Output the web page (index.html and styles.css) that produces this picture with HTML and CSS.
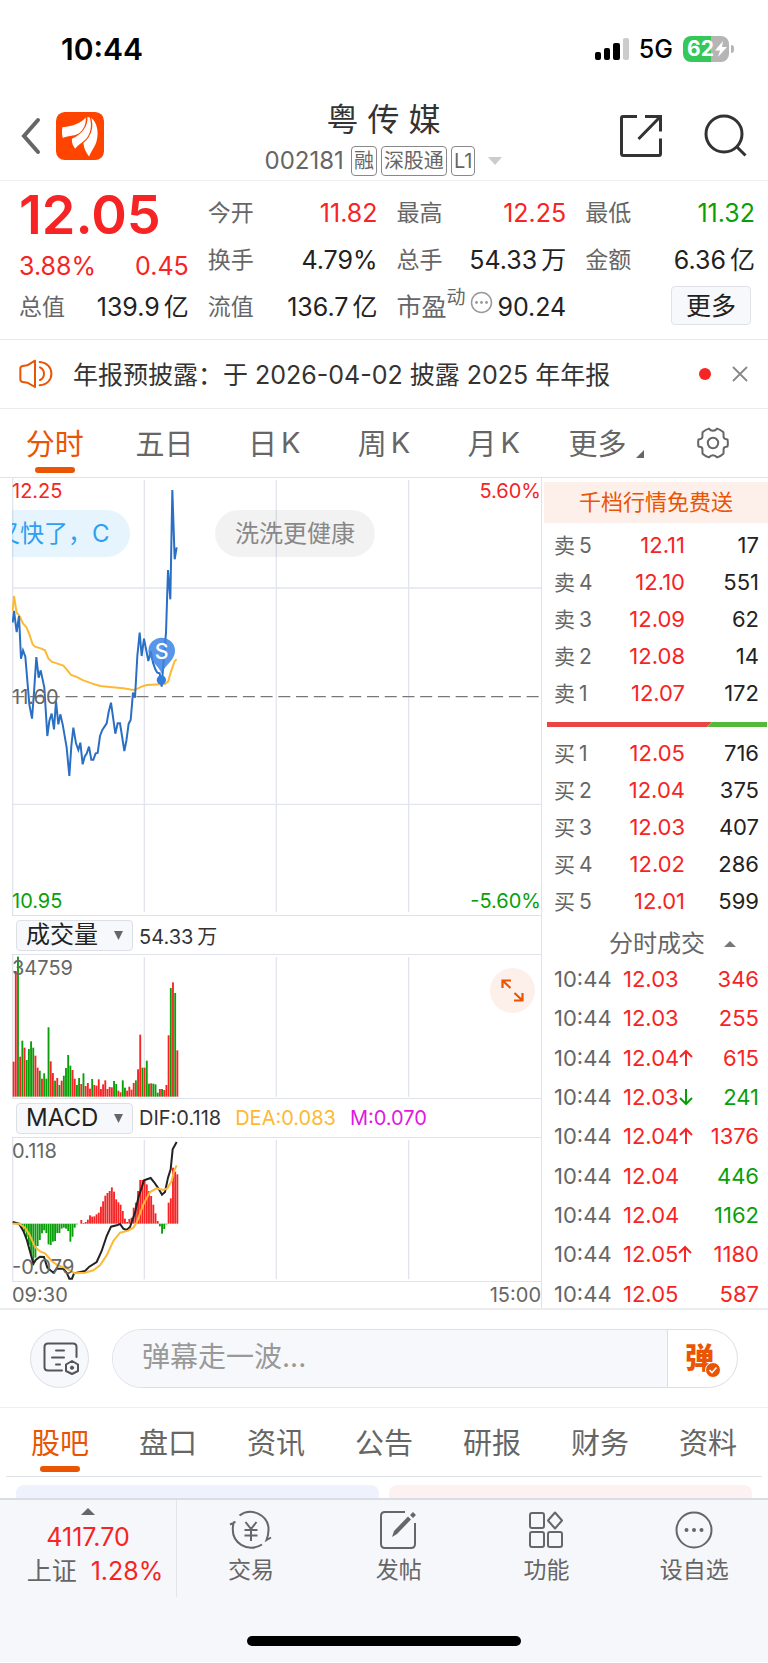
FILE: index.html
```html
<!DOCTYPE html>
<html lang="zh-CN">
<head>
<meta charset="utf-8">
<meta name="viewport" content="width=device-width, initial-scale=1">
<title>粤传媒 002181</title>
<link rel="stylesheet" href="styles.css">
</head>
<body>
<div class="status">
  <span class="clock">10:44</span>
  <div class="status-right">
    <svg width="34" height="22" viewBox="0 0 34 22"><g fill="#000"><rect y="14" width="6" height="8" rx="2"/><rect x="9" y="10" width="6" height="12" rx="2"/><rect x="18" y="5" width="7" height="17" rx="2"/></g><rect x="28" width="6" height="22" rx="2" fill="#ccc"/></svg>
    <span class="net">5G</span>
    <span class="battery"><span class="level">62</span><svg width="14" height="18" viewBox="0 0 14 18"><path d="M9 1 1 10.500h5L4 17l9-10H8z" fill="#fff"/></svg></span>
  </div>
</div>

<header class="header">
  <div class="header-left">
    <button class="plain" aria-label="返回"><svg width="21" height="38" viewBox="0 0 21 38"><path d="M18 3 4 19 18 35" fill="none" stroke="#666" stroke-width="4" stroke-linecap="round"/></svg></button>
    <svg class="logo" width="48" height="48" viewBox="138 274 142 142"><rect x="138" y="274" width="142" height="142" rx="26" fill="#ff4400"/><g fill="#fff"><path d="M157 319C190 316 211 306 226 290 228 308 220 327 204 338 190 346 172 343 158 351 155 340 155 328 157 319Z"/><path d="M231 288C234 314 215 340 185 353 184 366 189 375 195 383 205 368 224 361 231 348 242 333 244 308 238 290Z"/><path d="M242 291C250 315 245 345 219 366 220 382 228 396 236 406 242 388 255 376 259 356 265 330 258 304 242 291Z"/></g></svg>
  </div>
  <div class="header-mid">
    <h1 class="title">粤 传 媒</h1>
    <div class="code-row"><span class="code">002181</span><span class="badge">融</span><span class="badge">深股通</span><span class="badge">L1</span><svg class="drop" width="14" height="8" viewBox="0 0 14 8"><path d="M0 0h14L7 8z" fill="#ccc"/></svg></div>
  </div>
  <div class="header-right">
    <button class="plain" aria-label="分享"><svg width="44" height="44" viewBox="0 0 44 44" fill="none" stroke="#333" stroke-width="3"><path d="M18 2.500H4Q2.500 2.500 2.500 4V39.500Q2.500 41.500 4.500 41.500H40Q41.500 41.500 41.500 39.500V24.500M26 2.500H41.500V17.500M41 3 19.500 25"/></svg></button>
    <button class="plain" aria-label="搜索"><svg width="44" height="44" viewBox="0 0 44 44" fill="none" stroke="#333" stroke-width="3"><circle cx="21" cy="20" r="18"/><path d="M33.500 32.500 42.500 41.500"/></svg></button>
  </div>
</header>

<section class="quote">
  <div class="quote-col">
    <div class="price">12.05</div>
    <div class="change"><span>3.88%</span><span>0.45</span></div>
    <div class="pair total"><span class="label">总值</span><span>139.9<span class="unit">亿</span></span></div>
  </div>
  <div class="quote-col">
    <div class="pair"><span class="label">今开</span><span class="up">11.82</span></div>
    <div class="pair"><span class="label">换手</span><span>4.79%</span></div>
    <div class="pair"><span class="label">流值</span><span>136.7<span class="unit">亿</span></span></div>
  </div>
  <div class="quote-col">
    <div class="pair"><span class="label">最高</span><span class="up">12.25</span></div>
    <div class="pair"><span class="label">总手</span><span>54.33<span class="unit">万</span></span></div>
    <div class="pair"><span class="pe">市盈<sup>动</sup></span><svg class="info" width="23" height="23" viewBox="0 0 23 23"><circle cx="11.500" cy="11.500" r="10" fill="none" stroke="#999" stroke-width="1.500"/><g fill="#999"><circle cx="6.500" cy="11.500" r="1.400"/><circle cx="11.500" cy="11.500" r="1.400"/><circle cx="16.500" cy="11.500" r="1.400"/></g></svg><span>90.24</span></div>
  </div>
  <div class="quote-col">
    <div class="pair"><span class="label">最低</span><span class="down">11.32</span></div>
    <div class="pair"><span class="label">金额</span><span>6.36<span class="unit">亿</span></span></div>
    <div class="pair end"><button class="more">更多</button></div>
  </div>
</section>

<section class="notice">
  <svg width="34" height="30" viewBox="57 536 102 90" fill="none" stroke="#ea5504" stroke-width="6" stroke-linejoin="round" stroke-linecap="round"><path d="M105 541 82 555 68 557Q61 558 61 565V597Q61 604 68 605L82 607 105 620ZM120 561Q132 567 132 580T120 599M119 545C166 548 166 612 119 615"/></svg>
  <p class="notice-text">年报预披露：于<span class="num">2026-04-02</span>披露<span class="num">2025</span>年年报</p>
  <span class="dot"></span>
  <button class="plain" aria-label="关闭"><svg width="16" height="16" viewBox="0 0 16 16"><path d="M1 1 15 15M15 1 1 15" stroke="#888" stroke-width="1.800"/></svg></button>
</section>

<nav class="tabs periods">
  <button class="tab active">分时</button><button class="tab">五日</button><button class="tab">日<span class="k">K</span></button><button class="tab">周<span class="k">K</span></button><button class="tab">月<span class="k">K</span></button><button class="tab more-tab">更多<svg class="corner" width="8" height="8" viewBox="0 0 8 8"><path d="M8 0v8H0z" fill="#666"/></svg></button><button class="tab gear" aria-label="设置"><svg width="32" height="32" viewBox="0 0 32 32" fill="none" stroke="#666" stroke-width="2" stroke-linejoin="round"><path d="M30.500 12.400Q31.200 16 30.500 19.600 26.500 20 26.600 22.100 26.600 25 26.400 26.800 23.500 29.500 20.100 30.400 18.500 28.200 16 28.200T11.900 30.400Q8.500 29.500 5.600 26.800 5.400 25 5.400 22.100 5.500 20 1.500 19.600 .8 16 1.500 12.400 5.500 12 5.400 9.900 5.400 7 5.600 5.200 8.500 2.500 11.900 1.600 13.500 3.800 16 3.800T20.100 1.600Q23.500 2.500 26.400 5.200 26.600 7 26.600 9.900 26.500 12 30.500 12.400Z"/><circle cx="16" cy="16" r="5.200"/></svg></button>
</nav>

<main class="market">
  <div class="charts">
    <div class="plot price-plot">
      <svg class="chart" viewBox="36 26 1587 1311" fill="none">
        <g stroke="#e2e5ee" stroke-width="4"><path d="M38 26V1337M433 32V1329M829 32V1329M1226 32V1329M36 356H1623M36 1005H1623"/></g>
        <path d="M37 682H1616" stroke="#777" stroke-width="4" stroke-dasharray="36 17.200"/>
        <path class="avg" d="M38 425 42 380 50 430 57 437 69 462 80 475 88 495 98 525 105 532 122 537 135 543 145 567 155 577 170 582 190 589 200 600 213 617 228 622 250 633 275 642 300 650 330 653 370 657 400 662 412 658 425 652 440 647 495 644 504 637 512 610 524 575 530 570"/>
        <path class="last" d="M38 460 42 425 50 488 57 440 63 568 69 543 76 562 88 705 96 748 102 670 109 563 116 625 122 603 133 655 142 800 148 755 155 733 162 780 168 695 175 765 181 735 188 765 200 835 208 920 214 830 220 775 228 822 235 842 241 820 248 885 254 862 260 853 267 832 274 871 280 871 287 852 293 851 300 800 307 782 320 762 326 728 333 700 340 750 346 793 353 762 360 762 366 800 373 845 379 815 386 763 392 752 399 670 405 685 412 560 419 490 425 560 432 508 445 575 452 545 459 580 466 600 472 610 479 612 485 652 492 560 498 490 504 302 511 390 517 62 524 270 530 234"/>
        <path d="M445 545A40 40 0 0 1 525 545C525 572 497 585 485 612 473 585 445 572 445 545Z" fill="#3c82e4" fill-opacity=".85"/>
        <circle cx="484" cy="632" r="14" fill="#2f7de0"/>
        <text class="marker" x="485" y="568" text-anchor="middle">S</text>
      </svg>
      <span class="axis tl up">12.25</span><span class="axis tr up">5.60%</span><span class="axis ml">11.60</span><span class="axis bl down">10.95</span><span class="axis br down">-5.60%</span>
      <span class="bullet bullet-own">又快了，C</span>
      <span class="bullet bullet-other">洗洗更健康</span>
    </div>
    <div class="indicator">
      <label class="picker"><select aria-label="副图指标一"><option>成交量</option></select><svg width="9" height="9" viewBox="0 0 9 9"><path d="M0 0h9L4.500 9z" fill="#666"/></svg></label>
      <span>54.33<span class="unit">万</span></span>
    </div>
    <div class="plot">
      <svg class="chart" viewBox="36 165 1587 429" fill="none">
        <path d="M38 165V594M433 171V590M829 171V590M1226 171V590" stroke="#e2e5ee" stroke-width="4"/>
        <g id="volume"></g>
      </svg>
      <span class="axis tl">34759</span>
      <button class="expand" aria-label="全屏"><svg width="23" height="23" viewBox="0 0 23 23" fill="none" stroke="#ea5504" stroke-width="2.200"><path d="M1.500 9V1.500H10M1.500 1.500 9.500 9M21.500 14V21.500H13M21.500 21.500 13.500 14"/></svg></button>
    </div>
    <div class="indicator">
      <label class="picker"><select aria-label="副图指标二"><option>MACD</option></select><svg width="9" height="9" viewBox="0 0 9 9"><path d="M0 0h9L4.500 9z" fill="#666"/></svg></label>
      <span class="macd"><span>DIF:0.118</span><span class="dea">DEA:0.083</span><span class="m">M:0.070</span></span>
    </div>
    <div class="plot">
      <svg class="chart" viewBox="36 711 1587 429" fill="none">
        <path d="M38 711V1140M433 717V1135M829 717V1135M1226 717V1135" stroke="#e2e5ee" stroke-width="4"/>
        <g id="macd"></g>
        <path d="M38 963 57 968 70 990 80 1015 100 1088 108 1076 120 1067 132 1068 142 1100 160 1115 170 1103 190 1103 200 1115 208 1133 216 1133 222 1117 255 1110 268 1097 290 1083 305 1050 320 1005 333 977 350 973 360 969 370 983 380 987 390 978 405 935 415 890 432 838 452 831 462 843 475 862 486 881 495 873 504 830 512 805 518 745 530 723" stroke="#222" stroke-width="6"/>
        <path class="avg" d="M38 968 57 968 75 980 88 1000 105 1038 120 1051 135 1057 155 1080 170 1091 200 1103 225 1117 255 1115 280 1108 300 1093 320 1063 340 1020 360 995 385 989 400 980 410 965 430 910 450 873 470 862 490 867 502 862 515 840 522 810 530 793"/>
      </svg>
      <span class="axis tl">0.118</span><span class="axis bl">-0.079</span>
    </div>
    <div class="times"><span>09:30</span><span>15:00</span></div>
  </div>

  <aside class="book">
    <a class="promo" href="#">千档行情免费送</a>
    <table class="levels">
      <tr><th>卖<span>5</span></th><td class="up">12.11</td><td>17</td></tr>
      <tr><th>卖<span>4</span></th><td class="up">12.10</td><td>551</td></tr>
      <tr><th>卖<span>3</span></th><td class="up">12.09</td><td>62</td></tr>
      <tr><th>卖<span>2</span></th><td class="up">12.08</td><td>14</td></tr>
      <tr><th>卖<span>1</span></th><td class="up">12.07</td><td>172</td></tr>
    </table>
    <svg class="ratio" height="5" viewBox="0 0 220 5" preserveAspectRatio="none"><path d="M0 0H165L160 5H0z" fill="#e94545"/><path d="M165 0H220V5H160z" fill="#55b93c"/></svg>
    <table class="levels">
      <tr><th>买<span>1</span></th><td class="up">12.05</td><td>716</td></tr>
      <tr><th>买<span>2</span></th><td class="up">12.04</td><td>375</td></tr>
      <tr><th>买<span>3</span></th><td class="up">12.03</td><td>407</td></tr>
      <tr><th>买<span>4</span></th><td class="up">12.02</td><td>286</td></tr>
      <tr><th>买<span>5</span></th><td class="up">12.01</td><td>599</td></tr>
    </table>
    <button class="ticks-head">分时成交<svg width="12" height="6" viewBox="0 0 12 6"><path d="M0 6h12L6 0z" fill="#777"/></svg></button>
    <table class="ticks">
      <tr><th>10:44</th><td class="up">12.03</td><td class="up">346</td></tr>
      <tr><th>10:44</th><td class="up">12.03</td><td class="up">255</td></tr>
      <tr><th>10:44</th><td class="up">12.04<svg class="arrow" viewBox="0 0 14 18"><path d="M7 17V2M1 8 7 2 13 8"/></svg></td><td class="up">615</td></tr>
      <tr><th>10:44</th><td class="up">12.03<svg class="arrow down" viewBox="0 0 14 18"><path d="M7 1V16M1 10 7 16 13 10"/></svg></td><td class="down">241</td></tr>
      <tr><th>10:44</th><td class="up">12.04<svg class="arrow" viewBox="0 0 14 18"><path d="M7 17V2M1 8 7 2 13 8"/></svg></td><td class="up">1376</td></tr>
      <tr><th>10:44</th><td class="up">12.04</td><td class="down">446</td></tr>
      <tr><th>10:44</th><td class="up">12.04</td><td class="down">1162</td></tr>
      <tr><th>10:44</th><td class="up">12.05<svg class="arrow" viewBox="0 0 14 18"><path d="M7 17V2M1 8 7 2 13 8"/></svg></td><td class="up">1180</td></tr>
      <tr><th>10:44</th><td class="up">12.05</td><td class="up">587</td></tr>
    </table>
  </aside>
</main>

<section class="composer">
  <button class="round" aria-label="弹幕设置"><svg width="37" height="33" viewBox="0 0 37 33" fill="none" stroke="#555" stroke-width="2" stroke-linecap="round"><path d="M19 28.500H5Q1.500 28.500 1.500 25V5Q1.500 1.500 5 1.500H30Q33.500 1.500 33.500 5V15M13 8.500H21M9 15.500H21M13 22.500H17"/><path d="M29 19 35 22.500V29L29 32 23 29V22.500Z" stroke-linejoin="round"/><circle cx="29" cy="25.700" r="1.600" fill="#555" stroke-width="1"/></svg></button>
  <div class="field">
    <input type="text" placeholder="弹幕走一波..." aria-label="弹幕">
    <button class="barrage" aria-label="弹幕开关"><span class="glyph">弹<svg width="16" height="16" viewBox="0 0 16 16"><circle cx="8" cy="8" r="7.500" fill="#ea5504" stroke="#fff"/><path d="M4.500 8 7 10.500 11.500 5.500" fill="none" stroke="#fff" stroke-width="1.600"/></svg></span></button>
  </div>
</section>

<nav class="tabs sections">
  <button class="tab active">股吧</button><button class="tab">盘口</button><button class="tab">资讯</button><button class="tab">公告</button><button class="tab">研报</button><button class="tab">财务</button><button class="tab">资料</button>
</nav>
<div class="cards"><div class="card blue"></div><div class="card pink"></div></div>

<footer class="footer">
  <div class="dock">
    <button class="index"><svg width="14" height="7" viewBox="0 0 14 7"><path d="M0 7h14L7 0z" fill="#666"/></svg><span class="index-value">4117.70</span><span class="index-row"><span>上证</span><span class="up">1.28%</span></span></button>
    <button class="item"><svg width="44" height="40" viewBox="0 0 44 40"><path d="M10.500 5.500C22 -3 40 5 39.500 20Q39.500 25 37.500 30L42 27.500M33 34.500C20 43 0 34 4.500 13L1 14.500M4 12.500 6.500 12M16.500 12 22 19 27.500 12M22 19V31M15.500 20H28.500M15.500 25.500H28.500"/></svg>交易</button>
    <button class="item"><svg width="40" height="40" viewBox="0 0 40 40"><path d="M26 2H6Q2 2 2 6V34Q2 38 6 38H32Q36 38 36 34V13"/><path d="M13 27 15 21 29 6.500 32 9.500 18 24ZM31 5 34 2 37 5 34 8Z" fill="#666" stroke="none"/></svg>发帖</button>
    <button class="item"><svg width="36" height="40" viewBox="0 0 36 40"><rect x="2" y="3" width="14" height="15" rx="2"/><rect x="2" y="22" width="14" height="15" rx="2"/><rect x="20" y="22" width="14" height="15" rx="2"/><path d="M27 2.500 34 10.500 27 18.500 20 10.500Z" stroke-linejoin="round"/></svg>功能</button>
    <button class="item"><svg width="40" height="40" viewBox="0 0 40 40"><circle cx="20" cy="20" r="17.500"/><g fill="#666" stroke="none"><circle cx="12.500" cy="20" r="2"/><circle cx="20" cy="20" r="2"/><circle cx="27.500" cy="20" r="2"/></g></svg>设自选</button>
  </div>
  <div class="home"></div>
</footer>
<script src="charts.js"></script>
</body>
</html>
```
FILE: styles.css
```css
* { box-sizing: border-box; }
body { margin: 0; background: #fff; color: #222; font-family: Inter, "Noto Sans CJK SC", sans-serif; }
button, input, select { font: inherit; color: inherit; margin: 0; }
button { border: 0; background: none; padding: 0; }
svg { display: block; flex: none; }
.plain { display: block; }
.up { color: #f62424; }
.down { color: #0a9f0a; }
.unit { margin-left: 4px; }

.status { display: flex; justify-content: space-between; align-items: center; height: 92px; padding: 6px 35px 0 61px; }
.clock { font-size: 30px; font-weight: 600; color: #000; }
.status-right { display: flex; align-items: center; gap: 10px; }
.net { font-size: 25px; color: #000; font-weight: 500; }
.battery { position: relative; display: flex; align-items: center; width: 46px; height: 26px; border-radius: 8px; background: linear-gradient(90deg, #34c759 60%, #b5b5b5 60%); padding-left: 4px; margin-right: 4px; }
.battery::after { content: ""; position: absolute; right: -5px; top: 9px; width: 3px; height: 8px; border-radius: 0 4px 4px 0; background: #b5b5b5; }
.level { font-size: 21px; font-weight: 700; color: #fff; line-height: 26px; }

.header { display: grid; grid-template-columns: 1fr auto 1fr; align-items: center; height: 89px; padding: 0 21px 0 20px; border-bottom: 1px solid #eee; }
.header-left { display: flex; align-items: center; gap: 15px; }
.header-right { display: flex; align-items: center; justify-content: flex-end; gap: 40px; }
.header-mid { display: flex; flex-direction: column; align-items: center; gap: 6px; padding-top: 3px; }
.title { margin: 0; font-size: 32px; line-height: 40px; font-weight: 400; color: #333; }
.code-row { display: flex; align-items: center; gap: 4px; color: #666; }
.code { font-size: 24px; line-height: 30px; margin-right: 3px; }
.badge { font-size: 20px; line-height: 28px; padding: 0 2px; border: 1px solid #888; border-radius: 4px; }
.drop { margin-left: 9px; }

.quote { display: grid; grid-template-columns: repeat(4, 1fr); gap: 19px; padding: 9px 13px 8px 19px; font-size: 25px; border-bottom: 1px solid #e8e8ea; }
.quote-col { display: flex; flex-direction: column; }
.pair, .change { display: flex; justify-content: space-between; align-items: center; line-height: 47px; white-space: nowrap; }
.pair.total { line-height: 30px; }
.price { font-size: 54px; font-weight: 600; line-height: 50px; color: #f62424; }
.change { color: #f62424; line-height: 52px; }
.label { font-size: 23px; color: #666; }
.pe { color: #666; }
.pe sup { font-size: 19px; line-height: 0; vertical-align: 12px; }
.info { margin-bottom: 10px; }
.end { justify-content: flex-end; height: 47px; }
.more { width: 80px; height: 39px; line-height: 36px; margin: 0 4px 4px 0; border: 1px solid #dfe2e8; border-radius: 4px; background: #f6f8fb; }

.notice { display: flex; align-items: center; height: 69px; padding: 0 20px 0 19px; border-bottom: 1px solid #ebebed; }
.notice-text { flex: 1; margin: 0 0 0 20px; padding-bottom: 3px; font-size: 25px; color: #333; white-space: nowrap; }
.num { margin: 0 7px; }
.dot { width: 12px; height: 12px; border-radius: 50%; background: #f62424; margin-right: 21px; }

.tabs { display: grid; grid-template-columns: repeat(7, 1fr); height: 69px; border-bottom: 1px solid #e0e2ea; font-size: 29px; }
.tab { position: relative; display: flex; justify-content: center; align-items: center; padding-bottom: 2px; color: #666; }
.tab.active { color: #ea5504; }
.tab.active::after { content: ""; position: absolute; bottom: 4px; left: 50%; width: 40px; height: 6px; margin-left: -20px; border-radius: 3px; background: #ea5504; }
.k { margin-left: 4px; }
.corner { align-self: flex-end; margin: 0 -6px 17px 10px; }
.gear { padding-bottom: 0; }
.sections { margin: 0 6px; }

.market { display: flex; border-bottom: 2px solid #ededf0; }
.charts { flex: 1; min-width: 0; margin-left: 12px; }
.plot { position: relative; overflow: hidden; border-bottom: 1px solid #dfe2ea; }
.chart { width: 100%; height: auto; }
.avg { stroke: #fdb933; stroke-width: 6; }
.last { stroke: #2a6fc4; stroke-width: 6; }
.marker { font-size: 64px; fill: #fff; font-weight: 500; }
.axis { position: absolute; font-size: 20px; line-height: 24px; color: #666; }
.axis.up { color: #f62424; }
.axis.down { color: #0a9f0a; }
.tl { left: 0; top: 1px; }
.tr { right: 0; top: 1px; }
.ml { left: 0; top: 50%; margin-top: -12px; }
.bl { left: 0; bottom: 2px; }
.br { right: 0; bottom: 2px; }
.bullet { position: absolute; top: 32px; font-size: 24px; line-height: 47px; padding: 0 20px; border-radius: 24px; white-space: nowrap; }
.bullet-own { left: -36px; color: #2f9ff0; background: rgba(50, 165, 240, .12); }
.bullet-other { left: 203px; color: #888; background: rgba(0, 0, 0, .05); }
.indicator { display: flex; align-items: center; gap: 6px; height: 39px; padding-left: 4px; border-bottom: 1px solid #dfe2ea; font-size: 20px; color: #333; }
.picker { position: relative; width: 117px; height: 31px; }
.picker svg { position: absolute; right: 10px; top: 11px; pointer-events: none; }
.picker select { appearance: none; width: 100%; height: 100%; padding: 0 0 0 9px; font-size: 24px; line-height: 28px; color: #222; border: 1px solid #dcdfe6; border-radius: 4px; background: #f6f8fb; }
.macd { display: flex; gap: 14px; }
.dea { color: #fdb933; }
.m { color: #e018e0; }
.expand { position: absolute; right: 6px; top: 13px; display: flex; align-items: center; justify-content: center; width: 45px; height: 45px; border-radius: 50%; background: #fdf0ea; }
.times { display: flex; justify-content: space-between; font-size: 20px; line-height: 26px; color: #666; }

.book { width: 227px; border-left: 1px solid #e0e2ea; padding-top: 4px; }
.promo { display: block; margin-left: 2px; line-height: 41px; font-size: 22px; text-align: center; text-decoration: none; color: #ea5504; background: #fdf0ea; }
table { width: 100%; border-collapse: collapse; font-size: 22px; }
th { font-weight: 400; text-align: left; color: #666; padding: 0 0 0 12px; }
td { padding: 0; }
td:last-child { text-align: right; padding-right: 9px; }
.levels { line-height: 37px; margin-top: 4px; }
.levels th { font-size: 21px; }
.levels th span { margin-left: 4px; }
.levels td { text-align: right; width: 83px; }
.ratio { width: 220px; margin: 10px 0 0 5px; }
.ratio + .levels { margin-top: 8px; }
.ticks-head { display: flex; align-items: center; gap: 19px; height: 32px; margin: 8px 0 0 67px; line-height: 32px; font-size: 24px; color: #666; }
.ticks { line-height: 39px; margin-bottom: -8px; }
.ticks tr:nth-child(3n) { line-height: 40px; }
.ticks th { width: 81px; }
.arrow { display: inline-block; width: 14px; height: 18px; vertical-align: -1px; fill: none; stroke: #f62424; stroke-width: 2; }
.arrow.down { stroke: #0a9f0a; }

.composer { display: flex; gap: 23px; padding: 19px 30px; border-bottom: 1px solid #eee; }
.round { display: flex; align-items: center; justify-content: center; flex: none; width: 59px; height: 59px; border: 1px solid #dcdfe6; border-radius: 50%; background: #f6f8fb; padding-left: 3px; }
.field { display: flex; flex: 1; height: 59px; border: 1px solid #dcdfe6; border-radius: 30px; overflow: hidden; }
.field input { flex: 1; min-width: 0; border: 0; outline: 0; padding: 0 0 4px 29px; font-size: 28px; background: #f6f8fb; }
.field input::placeholder { color: #999; opacity: 1; }
.barrage { width: 70px; border-left: 1px solid #dcdfe6; color: #ea5504; }
.glyph { position: relative; display: inline-block; font-size: 29px; line-height: 32px; font-weight: 900; margin-right: 6px; }
.glyph svg { position: absolute; right: -7px; bottom: -3px; }

.cards { display: flex; gap: 10px; padding: 8px 16px 0; }
.card { flex: 1; height: 13px; border-radius: 8px 8px 0 0; }
.blue { background: #edf2fc; }
.pink { background: #fef1f2; }

.footer { border-top: 2px solid #dadde3; background: #f6f7fa; padding-bottom: 16px; }
.dock { display: grid; grid-template-columns: 177px repeat(4, 1fr); height: 97px; color: #666; font-size: 23px; }
.index { display: flex; flex-direction: column; align-items: center; padding-top: 8px; border-right: 1px solid #e2e4e8; }
.index-value { font-size: 25px; line-height: 30px; margin-top: 7px; color: #f62424; }
.index-row { display: flex; gap: 14px; margin-left: 14px; font-size: 25px; line-height: 38px; }
.item { display: flex; flex-direction: column; align-items: center; gap: 3px; padding-top: 10px; line-height: 34px; }
.item svg { fill: none; stroke: #666; stroke-width: 2; }
.home { width: 274px; height: 10px; margin: 39px auto 0; border-radius: 5px; background: #000; }
```
FILE: charts.js
```js
const RED = "#f62424";
const GREEN = "#0a9f0a";
const STEP = 6.55;

// Draws vertical bars between a baseline and each value.
function drawBars(id, base, bars) {
  const group = document.getElementById(id);
  bars.forEach(([color, y], i) => {
    const rect = document.createElementNS("http://www.w3.org/2000/svg", "rect");
    rect.setAttribute("x", 38 + i * STEP);
    rect.setAttribute("y", Math.min(base, y));
    rect.setAttribute("width", 5.6);
    rect.setAttribute("height", Math.abs(base - y));
    rect.setAttribute("fill", color);
    group.appendChild(rect);
  });
}

const volume = "r485 r213 g170 r470 g422 r443 g480 g447 g424 g443 r467 r503 g512 r536 g520 g536 g382 r484 r519 g542 r534 g555 r542 g527 g504 g465 g497 r510 r536 g555 g534 r552 g520 r558 r549 r566 g537 r555 r557 r538 r567 r553 r541 r567 r561 r562 g543 g552 r572 r577 g541 g563 r572 r560 r569 r549 g541 r508 r404 g503 r503 g482 g551 r550 g551 g553 g578 r567 g567 r570 r555 r406 g264 r247 g279 r451";
drawBars("volume", 590, volume.split(" ").map((s) => [s[0] === "r" ? RED : GREEN, Number(s.slice(1))]));

const macd = [968, 968, 968, 970, 980, 992, 1008, 1032, 1060, 1093, 1070, 1035, 1017, 997, 988, 996, 1030, 1032, 1022, 1020, 996, 996, 983, 980, 983, 990, 1022, 1007, 980, 970, 968, 957, 966, 963, 956, 943, 947, 946, 940, 935, 917, 901, 884, 876, 870, 859, 872, 895, 904, 911, 930, 953, 963, 954, 950, 920, 905, 870, 837, 837, 837, 850, 870, 885, 911, 937, 960, 976, 998, 984, 970, 905, 892, 800, 812, 820];
drawBars("macd", 968, macd.map((y) => [y < 968 ? RED : GREEN, y]));
```
